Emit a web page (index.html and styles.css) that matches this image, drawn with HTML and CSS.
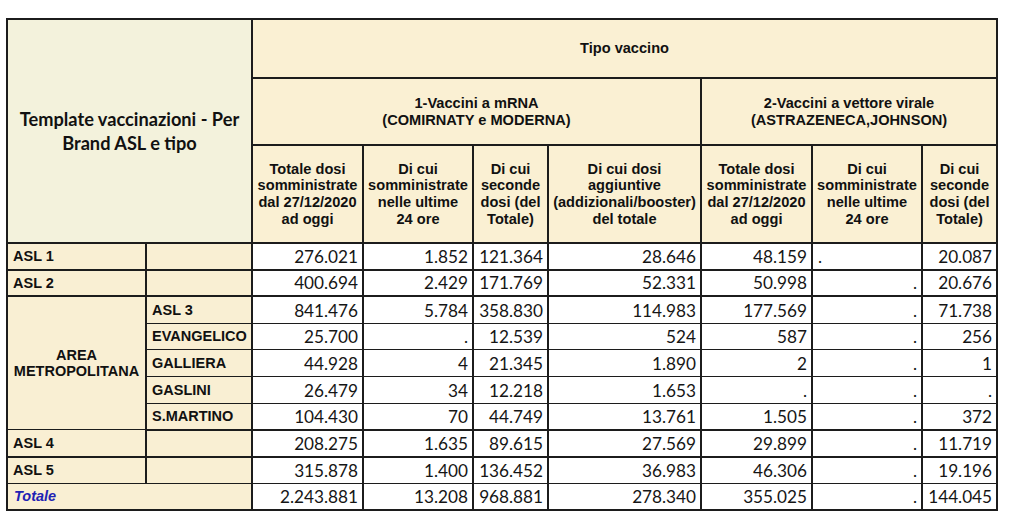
FILE: index.html
```html
<!DOCTYPE html>
<html lang="it">
<head>
<meta charset="utf-8">
<title>Template vaccinazioni</title>
<link rel="stylesheet" href="styles.css">
</head>
<body>
<table class="grid">
  <colgroup>
    <col class="c-a"><col class="c-b"><col class="c-n1"><col class="c-n2"><col class="c-n3"><col class="c-n4"><col class="c-n1"><col class="c-n2"><col class="c-n3">
  </colgroup>
  <thead>
    <tr class="h1">
      <th class="title" colspan="2" rowspan="3">Template vaccinazioni - Per<br>Brand ASL e tipo</th>
      <th class="hd" colspan="7">Tipo vaccino</th>
    </tr>
    <tr class="h2">
      <th class="hd" colspan="4">1-Vaccini a mRNA<br>(COMIRNATY e MODERNA)</th>
      <th class="hd" colspan="3">2-Vaccini a vettore virale<br>(ASTRAZENECA,JOHNSON)</th>
    </tr>
    <tr class="h3">
      <th class="hd">Totale dosi<br>somministrate<br>dal 27/12/2020<br>ad oggi</th>
      <th class="hd">Di cui<br>somministrate<br>nelle ultime<br>24 ore</th>
      <th class="hd">Di cui<br>seconde<br>dosi (del<br>Totale)</th>
      <th class="hd">Di cui dosi<br>aggiuntive<br>(addizionali/booster)<br>del totale</th>
      <th class="hd">Totale dosi<br>somministrate<br>dal 27/12/2020<br>ad oggi</th>
      <th class="hd">Di cui<br>somministrate<br>nelle ultime<br>24 ore</th>
      <th class="hd">Di cui<br>seconde<br>dosi (del<br>Totale)</th>
    </tr>
  </thead>
  <tbody>
    <tr class="r thick">
      <th class="lab">ASL 1</th><th class="lab"></th>
      <td>276.021</td><td>1.852</td><td>121.364</td><td>28.646</td><td>48.159</td><td class="left">.</td><td>20.087</td>
    </tr>
    <tr class="r thick">
      <th class="lab">ASL 2</th><th class="lab"></th>
      <td>400.694</td><td>2.429</td><td>171.769</td><td>52.331</td><td>50.998</td><td>.</td><td>20.676</td>
    </tr>
    <tr class="r">
      <th class="lab area" rowspan="5">AREA<br>METROPOLITANA</th><th class="lab">ASL 3</th>
      <td>841.476</td><td>5.784</td><td>358.830</td><td>114.983</td><td>177.569</td><td>.</td><td>71.738</td>
    </tr>
    <tr class="r">
      <th class="lab">EVANGELICO</th>
      <td>25.700</td><td>.</td><td>12.539</td><td>524</td><td>587</td><td>.</td><td>256</td>
    </tr>
    <tr class="r">
      <th class="lab">GALLIERA</th>
      <td>44.928</td><td>4</td><td>21.345</td><td>1.890</td><td>2</td><td>.</td><td>1</td>
    </tr>
    <tr class="r">
      <th class="lab">GASLINI</th>
      <td>26.479</td><td>34</td><td>12.218</td><td>1.653</td><td>.</td><td>.</td><td>.</td>
    </tr>
    <tr class="r thick">
      <th class="lab">S.MARTINO</th>
      <td>104.430</td><td>70</td><td>44.749</td><td>13.761</td><td>1.505</td><td>.</td><td>372</td>
    </tr>
    <tr class="r thick">
      <th class="lab">ASL 4</th><th class="lab"></th>
      <td>208.275</td><td>1.635</td><td>89.615</td><td>27.569</td><td>29.899</td><td>.</td><td>11.719</td>
    </tr>
    <tr class="r">
      <th class="lab">ASL 5</th><th class="lab"></th>
      <td>315.878</td><td>1.400</td><td>136.452</td><td>36.983</td><td>46.306</td><td>.</td><td>19.196</td>
    </tr>
    <tr class="r total">
      <th class="lab tot" colspan="2">Totale</th>
      <td>2.243.881</td><td>13.208</td><td>968.881</td><td>278.340</td><td>355.025</td><td>.</td><td>144.045</td>
    </tr>
  </tbody>
</table>
</body>
</html>
```
FILE: styles.css
```css
html, body {
  margin: 0;
  padding: 0;
  background: #ffffff;
}

.grid {
  margin: 18px 0 0 6px;
  border-collapse: collapse;
  table-layout: fixed;
  width: 990px;
  border: 2px solid #1c1c1c;
}

.c-a { width: 139px; }
.c-b { width: 106px; }
.c-n1 { width: 111px; }
.c-n2 { width: 110px; }
.c-n3 { width: 75px; }
.c-n4 { width: 153px; }

.grid th,
.grid td {
  border: 2px solid #1c1c1c;
  padding: 0;
}

.h1 { height: 59px; }
.h2 { height: 67px; }
.h3 { height: 98px; }

.title {
  background: #f3f2dc;
  font-family: Lato, "Liberation Sans", sans-serif;
  font-weight: 700;
  font-size: 18.2px;
  line-height: 24px;
  color: #111;
  text-align: center;
  vertical-align: middle;
}

.hd {
  background: #faf0d3;
  font-family: "Liberation Sans", Arial, sans-serif;
  font-weight: 700;
  font-size: 14.6px;
  line-height: 16.7px;
  color: #111;
  text-align: center;
  vertical-align: middle;
}

.r { height: 26.7px; }
.r th, .r td { border-top-width: 1px; border-bottom-width: 1px; }
.thick th, .thick td { border-bottom-width: 2px; }
.total th, .total td { border-bottom-width: 2px; }

.lab {
  background: #f9efd3;
  font-family: "Liberation Sans", Arial, sans-serif;
  font-weight: 700;
  font-size: 14.5px;
  color: #111;
  text-align: left;
  padding-left: 5px !important;
  vertical-align: middle;
}

.area {
  text-align: center;
  padding-left: 0 !important;
  line-height: 16.5px;
}

.tot {
  color: #1f22b4;
  font-style: italic;
  padding-left: 6px !important;
}

.grid td {
  background: #fff;
  font-family: Lato, "Liberation Sans", sans-serif;
  font-size: 17.2px;
  line-height: 20px;
  color: #151515;
  text-align: right;
  vertical-align: bottom;
  padding: 0 4px 2px 0;
}

.grid td.left {
  text-align: left;
  padding-left: 5px;
}
```
